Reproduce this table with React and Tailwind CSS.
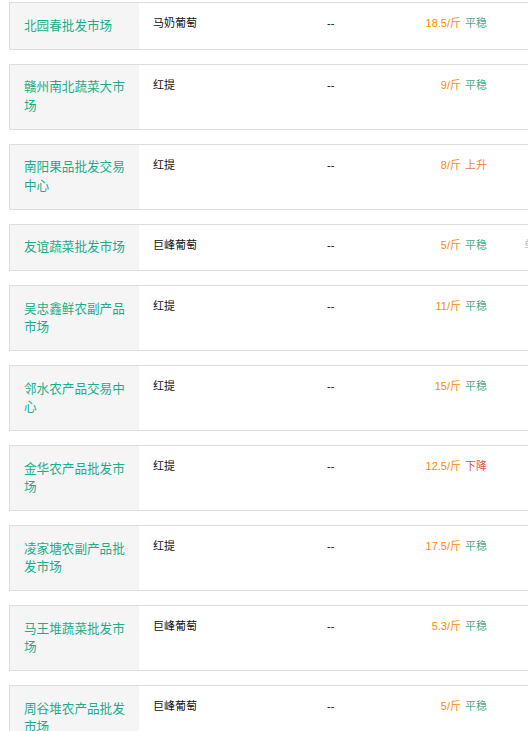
import React from 'react';

const rows = [
  { name: '北园春批发市场', variety: '马奶葡萄', price: '18.5', trend: '平稳' },
  { name: '赣州南北蔬菜大市场', variety: '红提', price: '9', trend: '平稳' },
  { name: '南阳果品批发交易中心', variety: '红提', price: '8', trend: '上升' },
  { name: '友谊蔬菜批发市场', variety: '巨峰葡萄', price: '5', trend: '平稳', extra: '单' },
  { name: '吴忠鑫鲜农副产品市场', variety: '红提', price: '11', trend: '平稳' },
  { name: '邻水农产品交易中心', variety: '红提', price: '15', trend: '平稳' },
  { name: '金华农产品批发市场', variety: '红提', price: '12.5', trend: '下降' },
  { name: '凌家塘农副产品批发市场', variety: '红提', price: '17.5', trend: '平稳' },
  { name: '马王堆蔬菜批发市场', variety: '巨峰葡萄', price: '5.3', trend: '平稳' },
  { name: '周谷堆农产品批发市场', variety: '巨峰葡萄', price: '5', trend: '平稳' },
];

const trendColor = {
  平稳: 'text-[#4fa98e]',
  上升: 'text-[#e8843f]',
  下降: 'text-[#e0524a]',
};

const Row = ({ row }) => (
  <div className="flex w-[620px] border border-[#dddddd] mb-[14px] bg-white">
    <div className="w-[129px] shrink-0 bg-[#f5f5f5] flex items-center pl-[14px] pr-[7px] py-[13.5px]">
      <span className="text-[12.6px] leading-[18.5px] text-[#1aae8a]">{row.name}</span>
    </div>
    <div className="flex items-start pt-[14px] text-[11px] leading-[13px]">
      <span className="w-[174px] ml-[14px] text-[#111]">{row.variety}</span>
      <span className="w-[80px] text-[#111]">--</span>
      <span className="w-[54px] text-right text-[#ff8a00]">{row.price}/斤</span>
      <span className={`ml-[4px] ${trendColor[row.trend]}`}>{row.trend}</span>
      {row.extra && <span className="ml-[37px] text-[#bbbbbb]">{row.extra}</span>}
    </div>
  </div>
);

export default function App() {
  return (
    <div
      className="w-[528px] h-[731px] overflow-hidden bg-white pt-[2px] pl-[9px]"
      style={{ fontFamily: '"Liberation Sans", "Noto Sans CJK SC", sans-serif' }}
    >
      {rows.map((row, i) => (
        <Row key={i} row={row} />
      ))}
    </div>
  );
}
